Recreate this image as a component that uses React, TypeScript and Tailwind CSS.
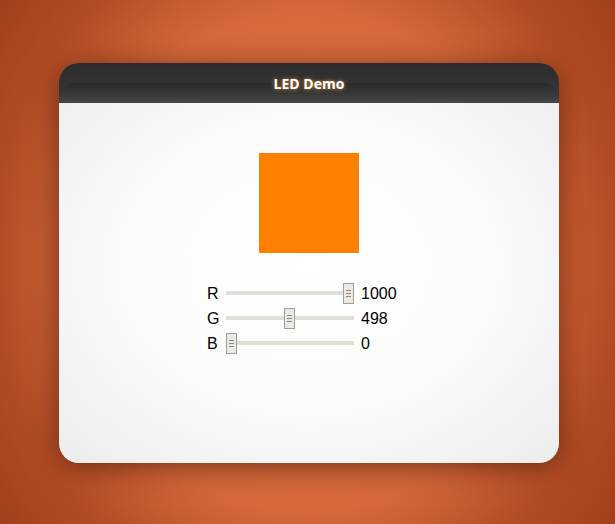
import React from "react"

const rows = [
  { label: "R", value: 1000 },
  { label: "G", value: 498 },
  { label: "B", value: 0 },
]

function Slider({ value }: { value: number }) {
  const pct = value / 1000
  return (
    <div className="relative h-[21px] w-[128px]">
      <div className="absolute left-0 right-0 top-[8px] h-[4px] bg-[#e2ded8]" />
      <div
        className="absolute top-0 flex h-[21px] w-[11px] flex-col items-center justify-center gap-[2px] border border-[#a29c95] bg-[#ece9e5]"
        style={{ left: `${pct * 117}px` }}
      >
        <div className="h-px w-[5px] bg-[#8d8780]" />
        <div className="h-px w-[5px] bg-[#8d8780]" />
        <div className="h-px w-[5px] bg-[#8d8780]" />
      </div>
    </div>
  )
}

export default function App() {
  return (
    <div className="flex h-[524px] w-[615px] items-start justify-start bg-[radial-gradient(ellipse_75%_100%_at_50%_50%,#e27340_0%,#d6683a_48%,#b14b23_68%,#9b3b18_90%)] pl-[59px] pt-[63px]">
      <div className="flex h-[400px] w-[500px] flex-col overflow-hidden rounded-[20px] shadow-[0_4px_28px_rgba(40,10,0,0.55)]">
        <div className="relative h-[40px] shrink-0 bg-[linear-gradient(to_bottom,#2c2c2c,#383838)]">
          <div className="absolute inset-x-0 bottom-0 h-[20px] rounded-t-[16px] bg-[linear-gradient(to_bottom,#292929,#464646)]" />
          <div className="relative flex h-full items-center justify-center font-['Open_Sans','Noto_Sans',sans-serif] text-[14px] font-bold text-white [text-shadow:0_0_4px_rgba(255,150,60,0.9)]">
            LED Demo
          </div>
        </div>
        <div className="flex flex-1 flex-col items-center bg-[radial-gradient(ellipse_at_50%_45%,#ffffff_0%,#fbfbfb_50%,#ececec_100%)] pt-[50px]">
          <div className="h-[100px] w-[100px] bg-[#ff8000]" />
          <div className="mt-[28px] flex w-full flex-col pl-[148px] font-['Liberation_Sans',Arial,sans-serif] text-[16px] text-black">
            {rows.map((r) => (
              <div key={r.label} className="flex h-[25px] items-center">
                <span className="w-[19px]">{r.label}</span>
                <Slider value={r.value} />
                <span className="ml-[7px]">{r.value}</span>
              </div>
            ))}
          </div>
        </div>
      </div>
    </div>
  )
}
